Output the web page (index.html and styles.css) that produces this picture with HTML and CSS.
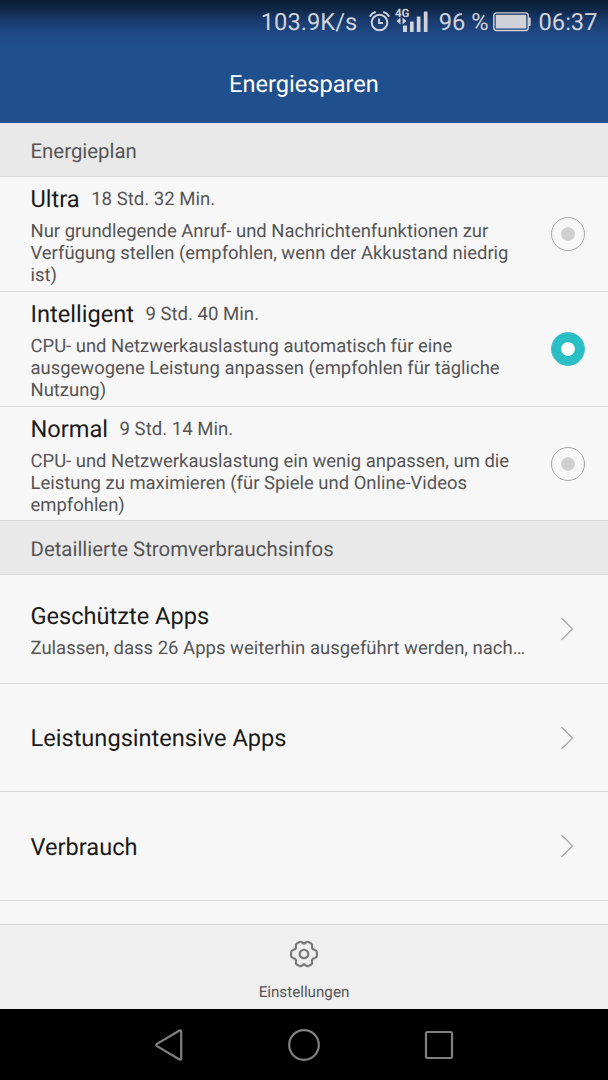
FILE: index.html
```html
<!DOCTYPE html>
<html lang="de">
<head>
<meta charset="utf-8">
<title>Energiesparen</title>
<link rel="stylesheet" href="styles.css">
</head>
<body>
<div class="screen">
  <header class="top">
    <div class="status">
      <span class="speed">103.9K/s</span>
      <svg class="alarm" width="22" height="24" viewBox="0 0 22 24" fill="none" stroke="#d0d4da" stroke-width="2" stroke-linecap="round">
        <circle cx="10.500" cy="13.500" r="7.800"/>
        <path d="M10 9.500v4.500h4" stroke-width="1.800" stroke-linecap="butt"/>
        <path d="M1.300 7Q3 4 6 3.300M15 3.300Q18 4 19.700 7"/>
      </svg>
      <svg class="signal" width="34" height="28" viewBox="0 0 34 28" fill="#d0d4da">
        <text x="0" y="12" class="net">4G</text>
        <path d="M1.500 16l4-3.500v7zM11.500 16l-4-3.500v7z"/>
        <rect x="8" y="20.500" width="4" height="6.500" rx="0.500"/>
        <rect x="15" y="16.500" width="3.700" height="10.500" rx="0.500"/>
        <rect x="21.800" y="11.500" width="3.700" height="15.500" rx="0.500"/>
        <rect x="28.800" y="6.500" width="3.700" height="20.500" rx="0.500"/>
      </svg>
      <span class="percent">96 %</span>
      <svg class="battery" width="38" height="20" viewBox="0 0 38 20">
        <rect x="0.800" y="0.900" width="34.400" height="17.600" rx="2.500" fill="none" stroke="#d0d4da" stroke-width="1.400"/>
        <rect x="2.700" y="2.800" width="30.600" height="13.800" rx="0.800" fill="#d0d4da"/>
        <path d="M35.500 5.500h1q1.200 0 1.200 1.200v6q0 1.200-1.200 1.200h-1z" fill="#d0d4da"/>
      </svg>
      <span class="clock">06:37</span>
    </div>
    <h1 class="title">Energiesparen</h1>
  </header>

  <main class="content">
    <h2 class="section">Energieplan</h2>
    <div class="plan">
      <div class="plan-text">
        <div class="plan-head"><span class="name">Ultra</span><span class="time">18 Std. 32 Min.</span></div>
        <p class="desc">Nur grundlegende Anruf- und Nachrichtenfunktionen zur<br>Verfügung stellen (empfohlen, wenn der Akkustand niedrig<br>ist)</p>
      </div>
      <span class="radio"></span>
    </div>
    <div class="plan">
      <div class="plan-text">
        <div class="plan-head"><span class="name">Intelligent</span><span class="time">9 Std. 40 Min.</span></div>
        <p class="desc">CPU- und Netzwerkauslastung automatisch für eine<br>ausgewogene Leistung anpassen (empfohlen für tägliche<br>Nutzung)</p>
      </div>
      <span class="radio checked"></span>
    </div>
    <div class="plan last">
      <div class="plan-text">
        <div class="plan-head"><span class="name">Normal</span><span class="time">9 Std. 14 Min.</span></div>
        <p class="desc">CPU- und Netzwerkauslastung ein wenig anpassen, um die<br>Leistung zu maximieren (für Spiele und Online-Videos<br>empfohlen)</p>
      </div>
      <span class="radio"></span>
    </div>
    <h2 class="section">Detaillierte Stromverbrauchsinfos</h2>
    <div class="link">
      <div class="link-text">
        <div class="name">Geschützte Apps</div>
        <p class="sub">Zulassen, dass 26 Apps weiterhin ausgeführt werden, nach…</p>
      </div>
      <svg class="chevron" width="14" height="24" viewBox="0 0 14 24"><path d="M1.500 1L12.500 12L1.500 23"/></svg>
    </div>
    <div class="link short">
      <div class="name">Leistungsintensive Apps</div>
      <svg class="chevron" width="14" height="24" viewBox="0 0 14 24"><path d="M1.500 1L12.500 12L1.500 23"/></svg>
    </div>
    <div class="link">
      <div class="name low">Verbrauch</div>
      <svg class="chevron" width="14" height="24" viewBox="0 0 14 24"><path d="M1.500 1L12.500 12L1.500 23"/></svg>
    </div>
  </main>

  <footer class="toolbar">
    <svg class="gear" width="30" height="30" viewBox="-15 -15 30 30" fill="none" stroke="#757575" stroke-width="2.100">
      <path stroke-linejoin="round" d="M-4.500 -12.100Q-2.500 -12.600 -1.500 -11.200Q0 -9.500 1.500 -11.200Q2.500 -12.600 4.500 -12.100L7 -10.700Q8.700 -9.500 8.100 -7.500Q7.600 -4.700 10.300 -4.300Q12.500 -4 12.900 -2V2Q12.500 4 10.300 4.300Q7.600 4.700 8.100 7.500Q8.700 9.500 7 10.700L4.500 12.100Q2.500 12.600 1.500 11.200Q0 9.500 -1.500 11.200Q-2.500 12.600 -4.500 12.100L-7 10.700Q-8.700 9.500 -8.100 7.500Q-7.600 4.700 -10.300 4.300Q-12.500 4 -12.900 2V-2Q-12.500 -4 -10.300 -4.300Q-7.600 -4.700 -8.100 -7.500Q-8.700 -9.500 -7 -10.700Z"/>
      <circle r="4.300"/>
    </svg>
    <span class="tool-label">Einstellungen</span>
  </footer>

  <nav class="nav">
    <svg width="32" height="34" viewBox="0 0 32 34"><path d="M4 15.900L26.500 2.600Q28.200 1.900 28.200 3.500V30.500Q28.200 32.100 26.500 31.400L4 18.100Q2.400 17 4 15.900Z"/></svg>
    <svg width="34" height="34" viewBox="0 0 34 34"><circle cx="17" cy="17" r="14.800"/></svg>
    <svg width="32" height="34" viewBox="0 0 32 34"><rect x="3" y="4" width="26" height="26" rx="1.200"/></svg>
  </nav>
</div>
</body>
</html>
```
FILE: styles.css
```css
* { box-sizing: border-box; }
body { margin: 0; font-family: Roboto, "Noto Sans", sans-serif; background: #000; text-rendering: geometricPrecision; }
h1, h2, p { margin: 0; font-weight: 400; }

.screen { width: 608px; height: 1080px; display: flex; flex-direction: column; overflow: hidden; }

.top {
  height: 123px;
  flex: none;
  background: linear-gradient(#0c1d36 0, #0f2543 8px, #18396b 20px, #1e4985 34px, #204f8d 45px);
}
.status {
  height: 43px;
  display: flex;
  align-items: center;
  justify-content: flex-end;
  padding-right: 10.5px;
  font-size: 23.7px;
  line-height: 28px;
  color: #d0d4da;
  white-space: nowrap;
}
.speed, .percent, .clock { padding-top: 1px; }
.alarm { margin: 0 4px 2px 12px; }
.signal { margin: 0 9.5px 6px 0; }
.net { font: 700 11.5px Roboto, sans-serif; }
.battery { margin: 1px 8px 0 4px; }
.title { height: 80px; padding-top: 26px; font-size: 23.6px; line-height: 30px; text-align: center; color: #fff; }

.content { flex: 1; background: #f7f7f7; }
.section {
  height: 54px;
  padding: 2px 30.5px 0;
  background: #e9e9e9;
  border-bottom: 1px solid #dbdbdb;
  font-size: 20.4px;
  line-height: 52px;
  color: #555;
}
.plan {
  height: 115px;
  display: flex;
  align-items: center;
  justify-content: space-between;
  padding: 0 23.5px 0 30.5px;
  border-bottom: 1px solid #d9d9dc;
}
.plan.last { height: 114px; }
.plan-text { height: 106px; white-space: nowrap; }
.plan-head { display: flex; align-items: center; gap: 11.5px; height: 36px; line-height: 36px; }
.name { font-size: 23.6px; color: #1a1a1a; }
.time { font-size: 18.6px; color: #555; }
.desc { padding-top: 3px; font-size: 18.46px; line-height: 22px; color: #555; }
.radio {
  width: 34px;
  height: 34px;
  border: 1px solid #a8a8a8;
  border-radius: 50%;
  background: radial-gradient(circle, #d0d0d0 6.400px, transparent 7.200px);
}
.radio.checked { border-color: #47c0c6; background: radial-gradient(circle, #fff 6.400px, #2abec5 7.200px); }

.link {
  height: 109px;
  display: flex;
  align-items: center;
  justify-content: space-between;
  padding: 0 34px 0 30.5px;
  border-bottom: 1px solid #d9d9d9;
}
.link.short { height: 108px; }
.link-text { padding-top: 3px; }
.name.low { padding-top: 2px; }
.sub { padding-top: 6px; font-size: 18.5px; line-height: 24px; color: #555; white-space: nowrap; }
.chevron { fill: none; stroke: #a8a8a8; stroke-width: 1.300; }

.toolbar {
  height: 85px;
  flex: none;
  display: flex;
  flex-direction: column;
  align-items: center;
  background: #efefef;
  border-top: 1px solid #d6d6d6;
  padding-top: 14px;
}
.tool-label { margin-top: 13px; font-size: 15.2px; line-height: 20px; color: #555; }

.nav {
  height: 71px;
  flex: none;
  display: flex;
  align-items: center;
  justify-content: space-between;
  padding: 0 153px;
  background: #000;
}
.nav svg { fill: none; stroke: #808080; stroke-width: 2.200; }
```
